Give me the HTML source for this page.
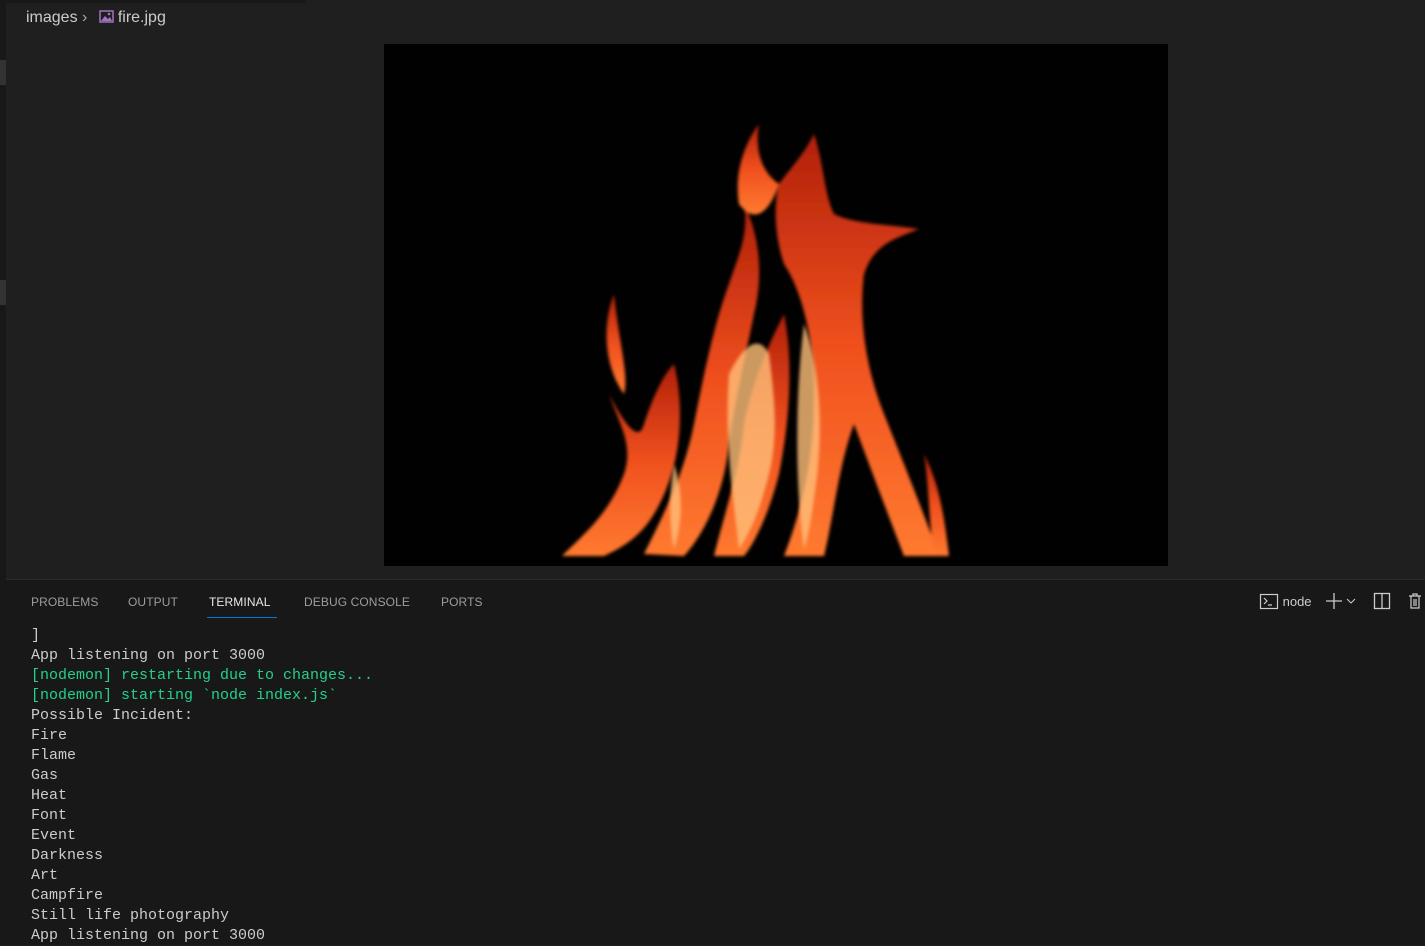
<!DOCTYPE html>
<html><head><style>
*{margin:0;padding:0;box-sizing:border-box}
body{width:1425px;height:945px;background:#1f1f1f;overflow:hidden;position:relative;font-family:"Liberation Sans",sans-serif}
.strip{position:absolute;left:0;top:0;width:6px;height:945px;background:#181818}
.bc{position:absolute;left:26px;top:9px;font-size:16px;color:#cccccc}
.img{position:absolute;left:384px;top:44px;width:784px;height:522px;background:#020101}
.panel{position:absolute;left:6px;top:579px;width:1419px;height:366px;background:#181818;border-top:1px solid #2b2b2b}
.tabs{position:absolute;top:15px;font-size:12px;color:#9d9d9d;letter-spacing:0.1px}
.tabs span{position:absolute;white-space:nowrap}
.term{position:absolute;left:25px;top:46px;font-family:"Liberation Mono",monospace;font-size:15px;line-height:20px;color:#cccccc;white-space:pre}
.g{color:#23d18b}
</style></head><body>
<div class="strip"></div>
<div style="position:absolute;left:0;top:60px;width:6px;height:25px;background:#333"></div>
<div style="position:absolute;left:0;top:280px;width:6px;height:25px;background:#333"></div>
<div style="position:absolute;left:6px;top:0;width:300px;height:3px;background:#181818"></div>
<div class="bc">images <span style="color:#aaa">›</span>
<svg width="16" height="14" style="vertical-align:-1px;margin:0 4px 0 6px"><rect x="2" y="2" width="13" height="11" fill="none" stroke="#a074c4" stroke-width="1.5"/><path d="M3 12 L7 7 L10 10 L12 8 L14 12Z" fill="#a074c4"/><circle cx="11" cy="5" r="1.3" fill="#a074c4"/></svg>fire.jpg</div>
<div class="img">
<svg width="784" height="522" viewBox="0 0 784 522">
<defs>
<linearGradient id="f" x1="0" y1="1" x2="0" y2="0"><stop offset="0" stop-color="#ff7a30"/><stop offset=".5" stop-color="#f0501e"/><stop offset="1" stop-color="#b0200a"/></linearGradient>
<filter id="b"><feGaussianBlur stdDeviation="1.5"/></filter>
</defs>
<g filter="url(#b)" fill="url(#f)" stroke="none">
<path d="M178 512 C200 490 225 470 240 430 C250 400 235 380 225 350 C240 380 255 400 260 380 C270 350 280 330 290 320 C300 360 300 420 270 470 C255 495 235 505 220 512 Z"/>
<path d="M230 250 C215 290 225 330 240 350 C245 330 235 300 230 250 Z"/>
<path d="M260 510 C280 470 300 430 310 380 C320 330 330 280 345 240 C355 210 365 190 360 160 C375 190 380 230 370 270 C360 320 350 360 345 400 C340 450 320 490 300 512 Z"/>
<path d="M355 160 C350 130 360 100 375 80 C370 110 380 130 395 140 C385 170 370 180 355 160 Z"/>
<path d="M395 140 C410 120 420 110 430 90 C440 120 440 150 450 170 C470 180 500 180 535 185 C510 195 490 200 480 230 C475 270 480 320 500 370 C520 420 540 470 555 512 L520 512 C500 460 485 420 470 380 C455 420 450 470 440 512 L400 512 C420 460 430 410 430 350 C430 300 420 250 400 220 C390 190 390 160 395 140 Z"/>
<path d="M330 512 C340 470 355 430 360 380 C370 330 390 290 400 270 C410 320 405 380 395 430 C385 470 370 500 360 512 Z"/>
<path d="M540 410 C555 440 560 470 565 512 L550 512 C545 480 545 440 540 410 Z"/>
</g>
<g fill="#ffc07a" opacity=".8" filter="url(#b)">
<path d="M345 330 C360 300 375 290 385 310 C390 350 395 390 385 430 C375 470 365 490 355 505 C350 460 340 400 345 330 Z"/>
<path d="M420 280 C435 320 440 380 432 440 C428 470 425 490 420 505 C412 450 410 360 420 280 Z"/>
<path d="M290 420 C300 450 298 480 290 505 C285 480 285 450 290 420 Z"/>
</g>
</svg>
</div>
<div class="panel">
<div class="tabs">
<span style="left:25px">PROBLEMS</span>
<span style="left:122px">OUTPUT</span>
<span style="left:203px;color:#e7e7e7">TERMINAL</span>
<span style="left:298px">DEBUG CONSOLE</span>
<span style="left:435px">PORTS</span>
</div>
<div style="position:absolute;left:201px;top:37px;width:70px;height:1px;background:#0078d4"></div>
<div style="position:absolute;left:1253px;top:12px;font-size:13px;color:#cccccc;white-space:nowrap">
<svg width="20" height="18" style="vertical-align:-4px"><rect x="1.5" y="2.5" width="17" height="14" fill="none" stroke="#ccc" stroke-width="1.2"/><path d="M5 6 L8 9 L5 12 M9 13 H13" stroke="#ccc" fill="none" stroke-width="1.2"/></svg> node
<svg width="20" height="18" style="vertical-align:-4px;margin-left:10px"><path d="M9 1 V17 M1 9 H17" stroke="#ccc" stroke-width="1.3"/></svg><svg width="12" height="10" style="vertical-align:0"><path d="M2 3 L6 7 L10 3" stroke="#ccc" fill="none"/></svg>
<svg width="18" height="18" style="vertical-align:-4px;margin-left:12px"><rect x="1.5" y="1.5" width="15" height="15" fill="none" stroke="#ccc" stroke-width="1.3"/><path d="M9 1.5 V16.5" stroke="#ccc" stroke-width="1.3"/></svg>
<svg width="14" height="18" style="vertical-align:-4px;margin-left:14px"><path d="M1 4 H13 M5 4 V2 H9 V4 M3 4 V16 H11 V4 M6 7 V14 M8 7 V14" stroke="#ccc" fill="none" stroke-width="1.2"/></svg>
</div>
<div class="term">]
App listening on port 3000
<span class="g">[nodemon] restarting due to changes...</span>
<span class="g">[nodemon] starting `node index.js`</span>
Possible Incident:
Fire
Flame
Gas
Heat
Font
Event
Darkness
Art
Campfire
Still life photography
App listening on port 3000</div>
</div>
</body></html>
